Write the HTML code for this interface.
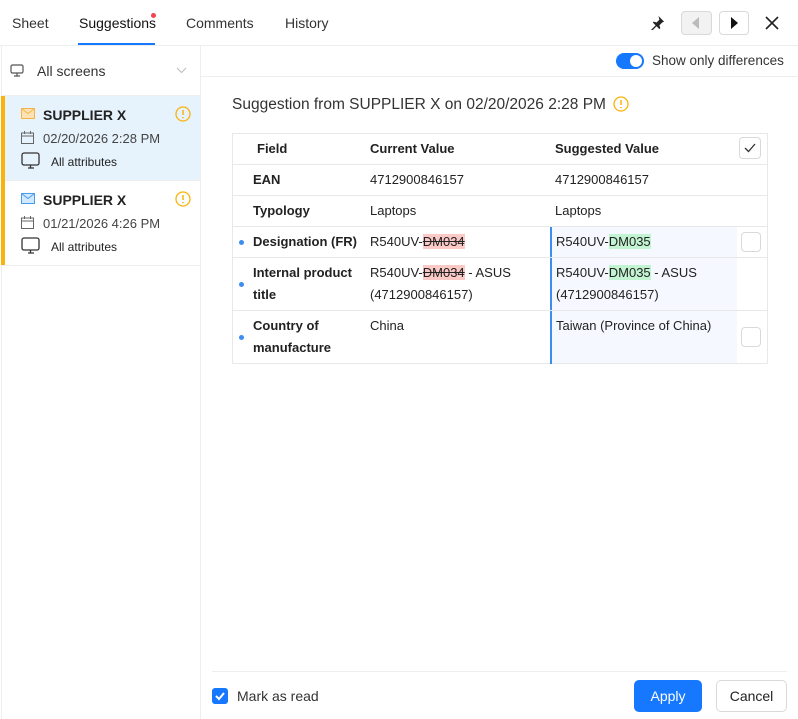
<!DOCTYPE html>
<html><head><meta charset="utf-8"><style>
*{box-sizing:border-box;margin:0;padding:0}
body{width:798px;height:719px;background:#fff;font-family:"Liberation Sans",sans-serif;font-size:13px;color:#222;position:relative;overflow:hidden}
.a{position:absolute}
.tab{position:absolute;top:15px;font-size:14px;color:#333}
.b{font-weight:bold}
.cell{position:absolute;font-size:13px;line-height:22px}
.hl{position:absolute;left:232px;width:536px;height:1px;background:#e8e8e8}
.dot{position:absolute;left:239px;width:5px;height:5px;border-radius:50%;background:#3b8df0}
.cb{position:absolute;width:20px;height:20px;border:1px solid #d9d9d9;border-radius:4px;background:#fff}
.del{background:#fccac6;text-decoration:line-through}
.ins{background:#c2f4d2}
</style></head><body>
<div class="tab" style="left:12px">Sheet</div>
<div class="tab" style="left:79px;color:#111">Suggestions</div>
<div class="a" style="left:151px;top:13px;width:5px;height:5px;border-radius:50%;background:#f0474e"></div>
<div class="a" style="left:78px;top:43px;width:77px;height:2px;background:#1677ff"></div>
<div class="tab" style="left:186px">Comments</div>
<div class="tab" style="left:285px">History</div>
<svg class="a" style="left:650px;top:15px" width="15" height="15" viewBox="0 0 16 16"><path d="M9 1l6 6-2 1-3 3 1 3-1 1-3-3-5 5-1-1 5-5-3-3 1-1 3 1 3-3z" fill="#222"/></svg>
<div class="a" style="left:681px;top:11px;width:31px;height:24px;border:1px solid #d9d9d9;border-radius:4px;background:#f2f2f2"></div>
<svg class="a" style="left:692px;top:17px" width="8" height="12"><path d="M7 0v12L0 6z" fill="#bbb"/></svg>
<div class="a" style="left:719px;top:11px;width:30px;height:24px;border:1px solid #d9d9d9;border-radius:4px"></div>
<svg class="a" style="left:731px;top:17px" width="8" height="12"><path d="M0 0v12l7-6z" fill="#111"/></svg>
<svg class="a" style="left:765px;top:16px" width="14" height="14"><path d="M1 1l12 12M13 1L1 13" stroke="#222" stroke-width="1.6"/></svg>
<div class="a" style="left:0;top:45px;width:798px;height:1px;background:#eee"></div>

<div class="a" style="left:1px;top:46px;width:200px;height:673px;border-left:1px solid #eee;border-right:1px solid #eee"></div>
<svg class="a" style="left:10px;top:64px" width="14" height="14" viewBox="0 0 14 14"><rect x="1" y="1" width="12" height="8" rx="1.5" fill="none" stroke="#555" stroke-width="1.2"/><path d="M4 12h6M7 9v3" stroke="#555" stroke-width="1.2"/></svg>
<div class="a" style="left:37px;top:63px;font-size:14px;color:#333">All screens</div>
<svg class="a" style="left:176px;top:67px" width="11" height="7"><path d="M1 1l4.5 4.5L10 1" stroke="#bbb" fill="none"/></svg>
<div class="a" style="left:1px;top:95px;width:199px;height:1px;background:#eee"></div>

<div class="a" style="left:1px;top:96px;width:199px;height:85px;background:#e6f2fc"></div>
<div class="a" style="left:1px;top:96px;width:4px;height:170px;background:#fab30b"></div>
<div class="a" style="left:5px;top:180px;width:195px;height:1px;background:#eee"></div>
<div class="a" style="left:1px;top:265px;width:199px;height:1px;background:#eee"></div>

<svg class="a" style="left:21px;top:108px" width="14" height="11"><rect x=".5" y=".5" width="13" height="10" fill="#fde3b3" stroke="#f5b347"/><path d="M.5 .5l6.5 5 6.5-5" fill="none" stroke="#f5b347"/></svg>
<div class="a b" style="left:43px;top:107px;font-size:14px">SUPPLIER X</div>
<svg class="a" style="left:175px;top:106px" width="16" height="16"><circle cx="8" cy="8" r="7" fill="none" stroke="#fab30b" stroke-width="1.3"/><path d="M8 4v5M8 11v1.3" stroke="#fab30b" stroke-width="1.5"/></svg>
<svg class="a" style="left:21px;top:131px" width="13" height="13"><rect x=".5" y="2" width="12" height="10.5" fill="none" stroke="#666"/><path d="M.5 5h12M3.5 0v3M9.5 0v3" stroke="#666"/></svg>
<div class="a" style="left:43px;top:131px;color:#444">02/20/2026 2:28 PM</div>
<svg class="a" style="left:21px;top:152px" width="20" height="18"><rect x="1" y="1" width="17" height="12" rx="2" fill="none" stroke="#333" stroke-width="1.3"/><path d="M7 16h6M9.5 13v3" stroke="#333" stroke-width="1.3"/></svg>
<div class="a" style="left:51px;top:155px;font-size:12px;color:#222">All attributes</div>

<svg class="a" style="left:21px;top:193px" width="14" height="11"><rect x=".5" y=".5" width="13" height="10" fill="#d2e8fd" stroke="#4a9bf2"/><path d="M.5 .5l6.5 5 6.5-5" fill="none" stroke="#4a9bf2"/></svg>
<div class="a b" style="left:43px;top:192px;font-size:14px">SUPPLIER X</div>
<svg class="a" style="left:175px;top:191px" width="16" height="16"><circle cx="8" cy="8" r="7" fill="none" stroke="#fab30b" stroke-width="1.3"/><path d="M8 4v5M8 11v1.3" stroke="#fab30b" stroke-width="1.5"/></svg>
<svg class="a" style="left:21px;top:216px" width="13" height="13"><rect x=".5" y="2" width="12" height="10.5" fill="none" stroke="#666"/><path d="M.5 5h12M3.5 0v3M9.5 0v3" stroke="#666"/></svg>
<div class="a" style="left:43px;top:216px;color:#444">01/21/2026 4:26 PM</div>
<svg class="a" style="left:21px;top:237px" width="20" height="18"><rect x="1" y="1" width="17" height="12" rx="2" fill="none" stroke="#333" stroke-width="1.3"/><path d="M7 16h6M9.5 13v3" stroke="#333" stroke-width="1.3"/></svg>
<div class="a" style="left:51px;top:240px;font-size:12px;color:#222">All attributes</div>

<div class="a" style="left:616px;top:53px;width:28px;height:16px;border-radius:8px;background:#1677ff"></div>
<div class="a" style="left:630px;top:55px;width:12px;height:12px;border-radius:50%;background:#fff"></div>
<div class="a" style="left:652px;top:53px;font-size:13.5px;color:#333;white-space:nowrap">Show only differences</div>
<div class="a" style="left:201px;top:76px;width:597px;height:1px;background:#eee"></div>

<div class="a" style="left:232px;top:96px;font-size:15.5px;color:#333">Suggestion from SUPPLIER X on 02/20/2026 2:28 PM</div>
<svg class="a" style="left:613px;top:96px" width="16" height="16"><circle cx="8" cy="8" r="7" fill="none" stroke="#fab30b" stroke-width="1.3"/><path d="M8 4v5M8 11v1.3" stroke="#fab30b" stroke-width="1.5"/></svg>

<div class="a" style="left:232px;top:133px;width:536px;height:231px;border:1px solid #e8e8e8"></div>
<div class="a" style="left:551px;top:227px;width:186px;height:136px;background:#f5f9ff"></div>
<div class="a" style="left:550px;top:226px;width:2px;height:138px;background:#3b8df0"></div>
<div class="hl" style="top:164px"></div><div class="hl" style="top:195px"></div><div class="hl" style="top:226px"></div><div class="hl" style="top:257px"></div><div class="hl" style="top:310px"></div>

<div class="cell b" style="left:257px;top:138px">Field</div>
<div class="cell b" style="left:370px;top:138px">Current Value</div>
<div class="cell b" style="left:555px;top:138px">Suggested Value</div>
<div class="cb" style="left:739px;top:137px;width:22px;height:22px"></div>
<svg class="a" style="left:744px;top:143px" width="12" height="10"><path d="M1 5l3.5 3.5L11 1" fill="none" stroke="#333" stroke-width="1.3"/></svg>

<div class="cell b" style="left:253px;top:169px">EAN</div>
<div class="cell" style="left:370px;top:169px">4712900846157</div>
<div class="cell" style="left:555px;top:169px">4712900846157</div>

<div class="cell b" style="left:253px;top:200px">Typology</div>
<div class="cell" style="left:370px;top:200px">Laptops</div>
<div class="cell" style="left:555px;top:200px">Laptops</div>

<div class="dot" style="top:240px"></div>
<div class="cell b" style="left:253px;top:231px">Designation (FR)</div>
<div class="cell" style="left:370px;top:231px">R540UV-<span class="del">DM034</span></div>
<div class="cell" style="left:556px;top:231px">R540UV-<span class="ins">DM035</span></div>
<div class="cb" style="left:741px;top:232px"></div>

<div class="dot" style="top:282px"></div>
<div class="cell b" style="left:253px;top:262px">Internal product<br>title</div>
<div class="cell" style="left:370px;top:262px">R540UV-<span class="del">DM034</span> - ASUS<br>(4712900846157)</div>
<div class="cell" style="left:556px;top:262px">R540UV-<span class="ins">DM035</span> - ASUS<br>(4712900846157)</div>

<div class="dot" style="top:335px"></div>
<div class="cell b" style="left:253px;top:315px">Country of<br>manufacture</div>
<div class="cell" style="left:370px;top:315px">China</div>
<div class="cell" style="left:556px;top:315px">Taiwan (Province of China)</div>
<div class="cb" style="left:741px;top:327px"></div>

<div class="a" style="left:212px;top:671px;width:575px;height:1px;background:#eee"></div>
<div class="a" style="left:212px;top:688px;width:16px;height:16px;border-radius:3px;background:#1677ff"></div>
<svg class="a" style="left:214px;top:691px" width="12" height="10"><path d="M2 5l3 3 5-6" fill="none" stroke="#fff" stroke-width="2"/></svg>
<div class="a" style="left:237px;top:688px;font-size:14px;color:#333">Mark as read</div>
<div class="a" style="left:634px;top:680px;width:68px;height:32px;border-radius:5px;background:#1677ff;color:#fff;font-size:14px;line-height:32px;text-align:center">Apply</div>
<div class="a" style="left:716px;top:680px;width:71px;height:32px;border-radius:5px;border:1px solid #d9d9d9;color:#222;font-size:14px;line-height:30px;text-align:center">Cancel</div>
</body></html>
